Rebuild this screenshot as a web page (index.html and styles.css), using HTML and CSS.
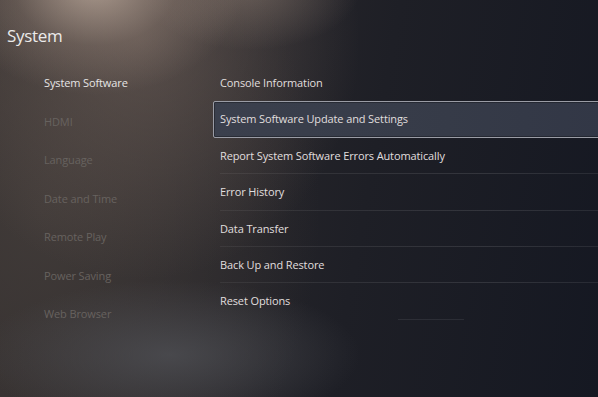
FILE: index.html
```html
<!DOCTYPE html>
<html lang="en">
<head>
<meta charset="utf-8">
<title>System</title>
<link rel="stylesheet" href="styles.css">
</head>
<body>
<div class="screen">
  <header class="title">System</header>
  <div class="content">
    <nav class="sidebar">
      <div class="nav-item active">System Software</div>
      <div class="nav-item">HDMI</div>
      <div class="nav-item">Language</div>
      <div class="nav-item">Date and Time</div>
      <div class="nav-item">Remote Play</div>
      <div class="nav-item">Power Saving</div>
      <div class="nav-item">Web Browser</div>
    </nav>
    <ul class="options">
      <li class="option">Console Information</li>
      <li class="option selected">System Software Update and Settings</li>
      <li class="option">Report System Software Errors Automatically</li>
      <li class="option">Error History</li>
      <li class="option">Data Transfer</li>
      <li class="option">Back Up and Restore</li>
      <li class="option last">Reset Options</li>
    </ul>
  </div>
</div>
</body>
</html>
```

FILE: styles.css
```css
* { box-sizing: border-box; }
html, body { margin: 0; padding: 0; }
body {
  width: 598px;
  height: 397px;
  overflow: hidden;
  font-family: "Open Sans", "Noto Sans", sans-serif;
  background: #1c1d24;
}
.screen {
  width: 598px;
  height: 397px;
  overflow: hidden;
  background:
    radial-gradient(ellipse 150px 110px at 95px -15px, rgba(200,180,165,0.75), rgba(160,140,128,0.3) 55%, rgba(0,0,0,0) 100%),
    radial-gradient(ellipse 110px 60px at 250px -10px, rgba(150,132,120,0.45), rgba(0,0,0,0) 100%),
    radial-gradient(ellipse 220px 240px at 140px 40px, rgba(120,104,96,0.55), rgba(0,0,0,0) 100%),
    radial-gradient(ellipse 190px 75px at 170px 355px, rgba(80,81,86,0.75), rgba(0,0,0,0) 100%),
    radial-gradient(ellipse 280px 360px at 40px 210px, rgba(64,58,56,1), rgba(64,58,56,0.4) 60%, rgba(0,0,0,0) 100%),
    linear-gradient(100deg, #35302f 0%, #2a282b 30%, #1e1f26 60%, #151822 100%);
}
.title {
  padding: 24px 0 0 7px;
  height: 64px;
  font-size: 17px;
  letter-spacing: -0.3px;
  color: #ebeaea;
}
.content {
  display: flex;
}
.sidebar {
  width: 213px;
  padding-left: 44px;
  display: flex;
  flex-direction: column;
}
.nav-item {
  height: 38.5px;
  line-height: 38.5px;
  font-size: 11px;
  letter-spacing: -0.12px;
  color: #67625f;
  white-space: nowrap;
}
.nav-item.active { color: #e6e5e5; }
.options {
  list-style: none;
  margin: 1px 0 0;
  padding: 0;
  flex: 1;
}
.option {
  position: relative;
  height: 36.4px;
  line-height: 36.4px;
  padding-left: 7px;
  font-size: 11px;
  letter-spacing: -0.12px;
  color: #e0dfdf;
  white-space: nowrap;
}
.option::after {
  content: "";
  position: absolute;
  left: 7px;
  right: 0;
  bottom: 0;
  height: 1px;
  background: linear-gradient(90deg, rgba(255,255,255,0.06), rgba(255,255,255,0.11) 70%, rgba(255,255,255,0.08));
}
.option:first-child::after,
.option.selected::after { display: none; }
.option.last::after {
  left: 185px;
  right: 134px;
  background: rgba(255,255,255,0.08);
}
.option.selected {
  margin-right: -6px;
  background: linear-gradient(90deg, #3b404d, #363b48 60%, #323746);
  border: 1px solid #9a9ca5;
  border-radius: 2px;
  padding-left: 6px;
  line-height: 34.4px;
  box-shadow: inset 0 0 0 1px rgba(0,0,0,0.3);
}
```
